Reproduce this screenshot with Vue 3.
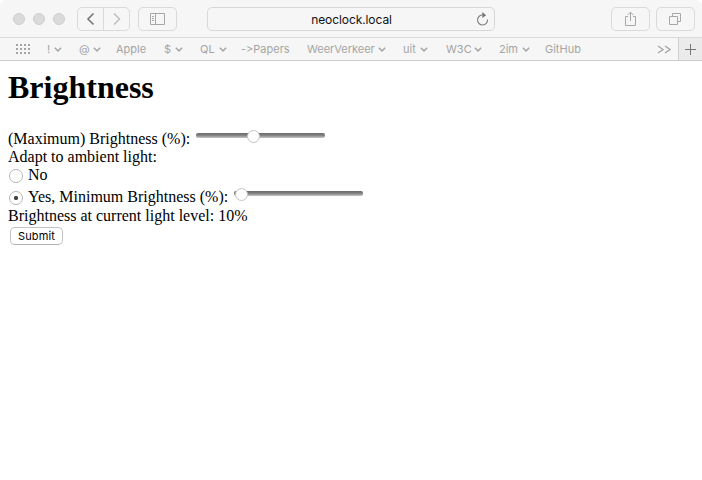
<script setup>
import { ref } from 'vue'

const bookmarks = [
  { label: '!', menu: true, width: 15, gap: 17 },
  { label: '@', menu: true, width: 22, gap: 15 },
  { label: 'Apple', width: 31, gap: 17 },
  { label: '$', menu: true, width: 19, gap: 17 },
  { label: 'QL', menu: true, width: 27, gap: 14 },
  { label: '->Papers', width: 49, gap: 17 },
  { label: 'WeerVerkeer', menu: true, width: 79, gap: 17 },
  { label: 'uit', menu: true, width: 25, gap: 18 },
  { label: 'W3C', menu: true, width: 36, gap: 17 },
  { label: '2im', menu: true, width: 31, gap: 15 },
  { label: 'GitHub', width: 38, gap: 0 },
]
const maximum = ref(44)
const minimum = ref(1)
const adapt = ref('yes')
</script>

<template>
  <div class="window">
    <header class="toolbar">
      <div class="lights"><i /><i /><i /></div>
      <div class="nav">
        <button class="back" aria-label="Back">
          <svg width="10" height="14" viewBox="0 0 10 14"><path d="M7.5 1.5 2 7l5.5 5.5" /></svg>
        </button>
        <button class="forward" aria-label="Forward">
          <svg width="10" height="14" viewBox="0 0 10 14"><path d="M2 1.5 7.5 7 2 12.5" /></svg>
        </button>
      </div>
      <button class="tool" aria-label="Sidebar">
        <svg width="15" height="12" viewBox="0 0 15 12"><path d="M.5.5h14v11H.5zM5.5.5v11M2 3.5h2M2 5.5h2M2 7.5h2" /></svg>
      </button>
      <div class="address">
        <span>neoclock.local</span>
        <svg class="reload" width="13" height="14" viewBox="0 0 13 14">
          <path d="M7 3A5 5 0 1 0 11.5 7.5" /><path class="head" d="M6.3 0 10.2 3.2 6.3 6z" />
        </svg>
      </div>
      <div class="actions">
        <button class="tool" aria-label="Share">
          <svg width="13" height="16" viewBox="0 0 13 16"><path d="M4 5.5H1.5v9h10v-9H9M6.5 10V1.2M3.7 4 6.5 1.2 9.3 4" /></svg>
        </button>
        <button class="tool" aria-label="Tabs">
          <svg width="13" height="13" viewBox="0 0 13 13"><path d="M.5 3.5h8v8h-8zM3.5 3.5v-3h8v8h-3" /></svg>
        </button>
      </div>
    </header>
    <nav class="bookmarks">
      <svg class="grid" width="15" height="10" viewBox="0 0 15 10">
        <path d="M0 1h14M0 5h14M0 9h14" />
      </svg>
      <a
        v-for="b in bookmarks"
        :key="b.label"
        :style="{ width: b.width + 'px', marginRight: b.gap + 'px' }"
      >
        <span>{{ b.label }}</span>
        <svg v-if="b.menu" width="8" height="5" viewBox="0 0 8 5"><path d="M.8.7 4 3.9 7.2.7" /></svg>
      </a>
      <svg class="more" width="14" height="9" viewBox="0 0 14 9"><path d="M1 1 6 4.5 1 8M8 1l5 3.5L8 8" /></svg>
      <button class="plus" aria-label="New tab">
        <svg width="11" height="11" viewBox="0 0 11 11"><path d="M0 5.5h11M5.5 0v11" /></svg>
      </button>
    </nav>
    <main>
      <h1>Brightness</h1>
      <form @submit.prevent>
        <div class="row first">
          <label for="max">(Maximum) Brightness (%):</label>
          <input id="max" v-model="maximum" type="range" />
        </div>
        <div class="row">Adapt to ambient light:</div>
        <label class="row"><input v-model="adapt" type="radio" value="no" />No</label>
        <div class="row yes">
          <label><input v-model="adapt" type="radio" value="yes" />Yes, Minimum Brightness (%):</label>
          <input v-model="minimum" type="range" aria-label="Minimum brightness" />
        </div>
        <div class="row">Brightness at current light level: 10%</div>
        <button class="submit">Submit</button>
      </form>
    </main>
  </div>
</template>

<style>
body {
  background: #fff;
}
</style>

<style scoped>
* {
  box-sizing: border-box;
}
.window {
  width: 702px;
  height: 480px;
  overflow: hidden;
  border-radius: 6px 6px 0 0;
  background: #fff;
  font-family: Inter, 'Liberation Sans', sans-serif;
}
button {
  padding: 0;
  margin: 0;
}
svg {
  display: block;
  flex: none;
  fill: none;
  stroke: #a8a8a8;
}
.toolbar {
  display: flex;
  align-items: flex-start;
  height: 38px;
  padding: 7px 7px 0 13px;
  background: #f6f6f6;
  border-bottom: 1px solid #dadada;
}
.lights {
  display: flex;
  gap: 8px;
  padding-top: 6px;
  width: 64px;
}
.lights i {
  width: 12px;
  height: 12px;
  border: 1px solid #cecece;
  border-radius: 50%;
  background: #dadada;
}
.nav {
  display: flex;
  width: 53px;
  height: 24px;
  margin-right: 8px;
  border: 1px solid #dadada;
  border-radius: 5px;
}
.nav button {
  flex: 1;
  display: flex;
  align-items: center;
  justify-content: center;
  border: 0;
  background: none;
}
.nav .back {
  border-right: 1px solid #dadada;
}
.back svg {
  stroke: #777;
  stroke-width: 1.6;
}
.forward svg {
  stroke: #bcbcbc;
  stroke-width: 1.5;
}
.tool {
  display: flex;
  align-items: center;
  justify-content: center;
  width: 39px;
  height: 24px;
  border: 1px solid #dadada;
  border-radius: 5px;
  background: transparent;
}
.address {
  display: flex;
  align-items: center;
  width: 288px;
  height: 24px;
  margin-left: 30px;
  padding-right: 5px;
  border: 1px solid #d8d8d8;
  border-radius: 5px;
  font-size: 12px;
  color: #111;
}
.address span {
  flex: 1;
  padding-left: 19px;
  text-align: center;
  letter-spacing: -0.08px;
}
.reload {
  stroke: #808080;
  stroke-width: 1.1;
}
.reload .head {
  fill: #777;
  stroke: none;
}
.actions {
  display: flex;
  gap: 6px;
  margin-left: auto;
}
.bookmarks {
  display: flex;
  align-items: center;
  height: 23px;
  padding-left: 16px;
  background: #f6f6f6;
  border-bottom: 1px solid #cbcbcb;
  font-size: 11px;
  font-feature-settings: 'calt' 0;
  color: #a5a5a5;
}
.bookmarks a {
  display: flex;
  flex: none;
  align-items: center;
  justify-content: space-between;
  white-space: nowrap;
}
.bookmarks a svg {
  stroke-width: 1.5;
}
.grid {
  margin-right: 16px;
  stroke: #a5a5a5;
  stroke-width: 2;
  stroke-dasharray: 2 2;
}
.more {
  margin-left: auto;
  margin-right: 7px;
  stroke-width: 1.4;
}
.plus {
  display: flex;
  align-items: center;
  justify-content: center;
  width: 24px;
  height: 22px;
  border: 0;
  border-left: 1px solid #cfcfcf;
  background: #ebebeb;
}
.plus svg {
  stroke: #777;
}
main {
  padding: 8px;
  font: 16px/18px 'Liberation Serif', 'Times New Roman', serif;
  color: #000;
}
h1 {
  margin: 0 0 24px;
  font-size: 32px;
  line-height: 37px;
}
.row {
  display: flex;
  align-items: flex-start;
  height: 18px;
  white-space: nowrap;
}
.first label {
  width: 188px;
}
.yes {
  height: 19px;
  margin-top: 4px;
}
.yes label {
  display: flex;
  width: 226px;
}
input {
  appearance: none;
  margin: 0;
}
input[type='radio'] {
  width: 14px;
  height: 14px;
  margin: 3px 5px 0 1px;
  border: 1px solid #b5b5b5;
  border-radius: 50%;
  background: #fff;
}
input[type='radio']:checked {
  background: radial-gradient(circle, #444 1.8px, #fff 2.4px);
}
input[type='range'] {
  width: 129px;
  height: 13px;
  margin-top: -1px;
  background: transparent;
}
input[type='range']::-webkit-slider-runnable-track {
  height: 5px;
  border-radius: 2px;
  background: linear-gradient(#686868, #858585 50%, #c8c8c8);
}
input[type='range']::-webkit-slider-thumb {
  appearance: none;
  width: 13px;
  height: 13px;
  margin-top: -3px;
  border: 1px solid #c4c4c4;
  border-radius: 50%;
  background: #fff;
}
.submit {
  display: block;
  width: 53px;
  height: 18px;
  margin: 2px 0 0 2px;
  border: 1px solid #c3c3c3;
  border-bottom-color: #b0b0b0;
  border-radius: 5px;
  background: #fff;
  color: #000;
  font: 11px/15px Inter, 'Liberation Sans', sans-serif;
  letter-spacing: 0.1px;
}
</style>
